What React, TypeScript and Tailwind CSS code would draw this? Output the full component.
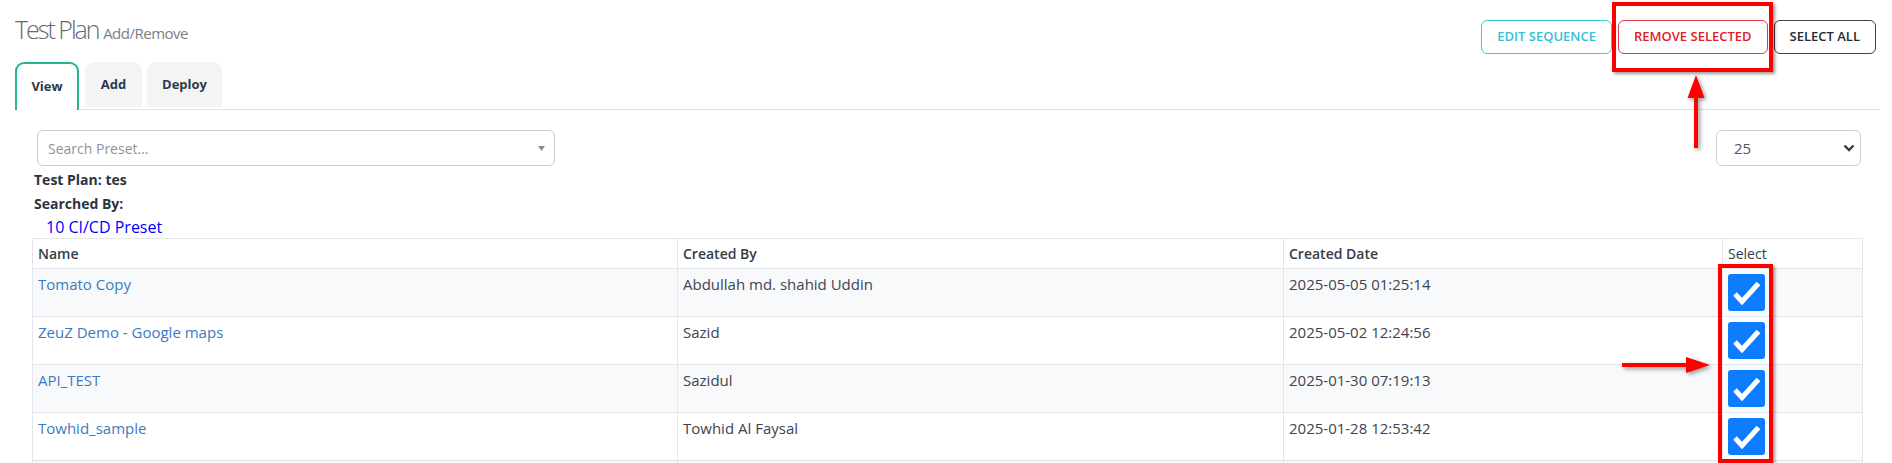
import React from "react";

const rows = [
  { name: "Tomato Copy", by: "Abdullah md. shahid Uddin", date: "2025-05-05 01:25:14" },
  { name: "ZeuZ Demo - Google maps", by: "Sazid", date: "2025-05-02 12:24:56" },
  { name: "API_TEST", by: "Sazidul", date: "2025-01-30 07:19:13" },
  { name: "Towhid_sample", by: "Towhid Al Faysal", date: "2025-01-28 12:53:42" },
];

function CheckBox() {
  return (
    <div className="flex h-[37px] w-[37px] items-center justify-center rounded-[3px] bg-[#0b7dfe]">
      <svg width="37" height="37" viewBox="0 0 37 37">
        <path d="M7 20 L14 27.5 L30.5 9.5" fill="none" stroke="#ffffff" strokeWidth="5" strokeLinecap="butt" strokeLinejoin="miter" />
      </svg>
    </div>
  );
}

export default function App() {
  return (
    <div className="relative h-[463px] w-[1892px] overflow-hidden bg-white font-['Open_Sans',sans-serif] text-[#333d4a]">
      <div className="pl-[15px] pr-[12px]">
        {/* Header */}
        <div className="flex items-start justify-between">
          <h1 className="mt-[13px] text-[25px] font-light leading-[33px] tracking-[-2px] text-[#666a70]">
            Test Plan <span className="text-[15px] font-normal tracking-[-0.5px] text-[#7a7f86]">Add/Remove</span>
          </h1>
          <div className="mr-[4px] mt-[20px] flex gap-[6px]">
            <button className="h-[34px] rounded-[6px] border border-[#3fcad8] px-[15px] text-[13px] font-semibold uppercase text-[#36c0d0]">
              Edit Sequence
            </button>
            <button className="h-[34px] rounded-[6px] border border-[#e23a42] px-[15px] text-[13px] font-semibold uppercase text-[#e0202a]">
              Remove Selected
            </button>
            <button className="h-[34px] rounded-[6px] border border-[#3a4350] px-[15px] text-[13px] font-semibold uppercase text-[#222b36]">
              Select All
            </button>
          </div>
        </div>

        {/* Tabs */}
        <div className="mt-[8px] flex items-start border-b border-[#dee2e6]">
          <div className="-mb-px flex h-[48px] w-[64px] items-center justify-center rounded-t-[9px] border-2 border-b-0 border-[#26b594] bg-white text-[13px] font-bold text-[#2d3a4b]">
            View
          </div>
          <div className="ml-[6px] flex h-[45px] w-[57px] items-center justify-center rounded-t-[9px] bg-[#f4f4f4] text-[13px] font-bold text-[#2d3a4b]">
            Add
          </div>
          <div className="ml-[5px] flex h-[45px] w-[75px] items-center justify-center rounded-t-[9px] bg-[#f4f4f4] text-[13px] font-bold text-[#2d3a4b]">
            Deploy
          </div>
        </div>

        {/* Content */}
        <div className="pl-[17px] pr-[18px] pt-[20px]">
          <div className="flex items-start justify-between">
            <div className="ml-[5px] flex h-[36px] w-[518px] items-center justify-between rounded-[6px] border border-[#c9ced6] pl-[10px] pr-[9px]">
              <span className="text-[14px] text-[#8e939b]">Search Preset...</span>
              <svg width="7" height="5" viewBox="0 0 7 5">
                <polygon points="0,0 7,0 3.5,5" fill="#8a8f96" />
              </svg>
            </div>
            <div className="mr-[1px] flex h-[36px] w-[145px] items-center justify-between rounded-[6px] border border-[#c9ced6] pl-[17px] pr-[5px]">
              <span className="text-[15px] text-[#4a5568]">25</span>
              <svg width="12" height="8" viewBox="0 0 12 8">
                <polyline points="1.5,1.5 6,6 10.5,1.5" fill="none" stroke="#343a40" strokeWidth="2.4" />
              </svg>
            </div>
          </div>
          <div className="ml-[2px] mt-[2px] text-[14px] font-bold leading-[24px] text-[#2c3440]">Test Plan: tes</div>
          <div className="ml-[2px] text-[14px] font-bold leading-[24px] text-[#2c3440]">Searched By:</div>
          <div className="ml-[14px] text-[16px] leading-[22px] text-[#0000ff]">10 CI/CD Preset</div>

          <table className="w-[1830px] table-fixed border-collapse">
            <colgroup>
              <col className="w-[645px]" />
              <col className="w-[606px]" />
              <col className="w-[439px]" />
              <col className="w-[140px]" />
            </colgroup>
            <thead>
              <tr>
                <th className="border border-[#e3e6ea] px-[5px] py-[5px] text-left text-[14px] font-semibold leading-[19px] text-[#333d4a]">Name</th>
                <th className="border border-[#e3e6ea] px-[5px] py-[5px] text-left text-[14px] font-semibold leading-[19px] text-[#333d4a]">Created By</th>
                <th className="border border-[#e3e6ea] px-[5px] py-[5px] text-left text-[14px] font-semibold leading-[19px] text-[#333d4a]">Created Date</th>
                <th className="border border-[#e3e6ea] px-[5px] py-[5px] text-left text-[14px] font-normal leading-[19px] text-[#333d4a]">Select</th>
              </tr>
            </thead>
            <tbody>
              {rows.map((r, i) => (
                <tr key={r.name} className={i % 2 === 0 ? "bg-[#f8f9fb]" : "bg-white"}>
                  <td className="border border-[#e3e6ea] px-[5px] py-[5px] align-top text-[15px] leading-[20px] text-[#3a7bbf]">{r.name}</td>
                  <td className="border border-[#e3e6ea] px-[5px] py-[5px] align-top text-[15px] leading-[20px] text-[#3d4450]">{r.by}</td>
                  <td className="border border-[#e3e6ea] px-[5px] py-[5px] align-top text-[15px] leading-[20px] text-[#3d4450]">{r.date}</td>
                  <td className="border border-[#e3e6ea] px-[5px] py-[5px] align-top">
                    <CheckBox />
                  </td>
                </tr>
              ))}
              <tr className="bg-[#f8f9fb]">
                <td className="h-[48px] border border-[#e3e6ea]" />
                <td className="border border-[#e3e6ea]" />
                <td className="border border-[#e3e6ea]" />
                <td className="border border-[#e3e6ea]" />
              </tr>
            </tbody>
          </table>
        </div>
      </div>

      {/* Annotations */}
      <div className="absolute left-[1612px] top-[2px] h-[70px] w-[161px] border-4 border-[#ff0000] shadow-[2px_2px_3px_rgba(0,0,0,0.4)]" />
      <svg className="absolute left-[1680px] top-[70px] drop-shadow-[2px_2px_2px_rgba(0,0,0,0.4)]" width="32" height="84" viewBox="0 0 32 84">
        <rect x="14" y="26" width="4" height="52" fill="#ff0000" />
        <polygon points="16,5 7.5,28 24.5,28" fill="#ff0000" />
      </svg>
      <div className="absolute left-[1718px] top-[264px] h-[199px] w-[55px] border-4 border-[#ff0000] shadow-[2px_2px_3px_rgba(0,0,0,0.4)]" />
      <svg className="absolute left-[1618px] top-[352px] drop-shadow-[2px_2px_2px_rgba(0,0,0,0.4)]" width="96" height="26" viewBox="0 0 96 26">
        <rect x="4" y="11" width="66" height="4" fill="#ff0000" />
        <polygon points="68,5 92,13 68,21" fill="#ff0000" />
      </svg>
    </div>
  );
}
